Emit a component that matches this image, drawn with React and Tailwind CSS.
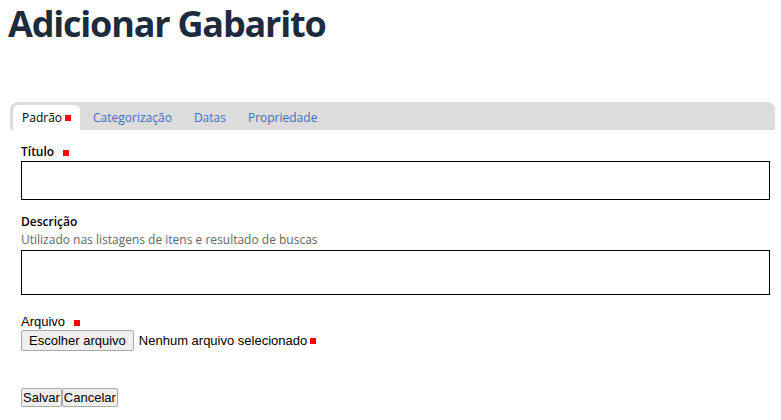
import { useState } from "react";

const tabs = ["Padrão", "Categorização", "Datas", "Propriedade"];

const Req = () => <span className="inline-block w-[6px] h-[6px] bg-[#ff0000] ml-[9px] align-middle"></span>;

const App = () => {
  const [active, setActive] = useState(0);
  return (
    <div className="w-[781px] h-[420px] bg-white overflow-hidden font-['Open_Sans',sans-serif]">
      <h1 className="pl-[8px] pt-[1px] text-[36px] leading-[46px] font-bold tracking-[-1.2px] text-[#1d2b3c] whitespace-nowrap">
        Adicionar Gabarito
      </h1>

      <div className="mt-[55px] ml-[10px] mr-[6px] h-[28px] bg-[#dcdcdc] rounded-t-[8px] flex items-end pl-[3px]">
        {tabs.map((t, i) => (
          <button
            key={t}
            onClick={() => setActive(i)}
            className={
              i === active
                ? "h-[25px] px-[9px] bg-white rounded-t-[5px] text-[12px] text-black flex items-center"
                : "h-[25px] pl-[13px] pr-[9px] text-[12px] text-[#3b6ec8] flex items-center"
            }
          >
            {t}
            {i === active && <span className="inline-block w-[6px] h-[6px] bg-[#ff0000] ml-[3px]"></span>}
          </button>
        ))}
      </div>

      <form className="pl-[21px] pr-[11px]">
        <label className="block mt-[13px] text-[12px] font-semibold leading-[17px] text-black">
          Título
          <Req />
        </label>
        <input type="text" className="block mt-[1px] w-full h-[39px] border border-black" />

        <label className="block mt-[13px] text-[12px] font-semibold leading-[17px] text-black">Descrição</label>
        <p className="mt-[1px] text-[12px] leading-[17px] text-[#666]">
          Utilizado nas listagens de itens e resultado de buscas
        </p>
        <textarea className="block mt-[2px] w-full h-[45px] border border-black resize-none" />

        <label className="block mt-[18px] text-[13px] leading-[17px] text-black font-['Liberation_Sans',sans-serif]">
          Arquivo
          <Req />
        </label>
        <div className="mt-0 flex items-center font-['Liberation_Sans',sans-serif] text-[13px] text-black">
          <button type="button" className="h-[21px] px-[7px] bg-[#efefef] border border-[#a8a8a8] rounded-[2px]">
            Escolher arquivo
          </button>
          <span className="ml-[5px]">Nenhum arquivo selecionado</span>
          <span className="inline-block w-[6px] h-[6px] bg-[#ff0000] ml-[3px]"></span>
        </div>

        <div className="mt-[37px] flex font-['Liberation_Sans',sans-serif] text-[13px] text-black">
          <button type="button" className="h-[19px] px-[1px] bg-[#efefef] border border-[#a8a8a8] rounded-[2px] leading-none">
            Salvar
          </button>
          <button type="button" className="h-[19px] px-[1px] bg-[#efefef] border border-[#a8a8a8] rounded-[2px] leading-none">
            Cancelar
          </button>
        </div>
      </form>
    </div>
  );
};
export default App;
